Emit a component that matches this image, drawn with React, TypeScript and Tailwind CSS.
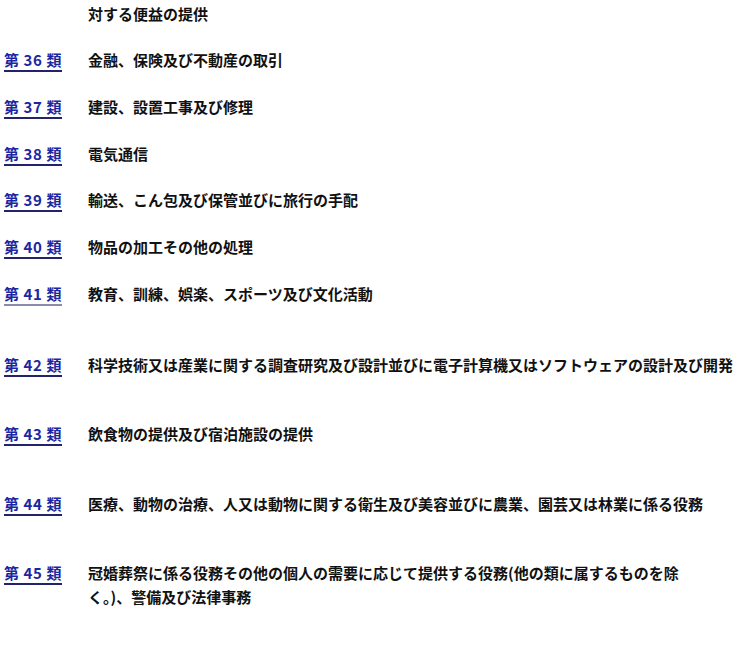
const ROWS = [
  { no: 36, text: "金融、保険及び不動産の取引", h: "h-[47px]" },
  { no: 37, text: "建設、設置工事及び修理", h: "h-[47px]" },
  { no: 38, text: "電気通信", h: "h-[46px]" },
  { no: 39, text: "輸送、こん包及び保管並びに旅行の手配", h: "h-[47px]" },
  { no: 40, text: "物品の加工その他の処理", h: "h-[47px]" },
  { no: 41, text: "教育、訓練、娯楽、スポーツ及び文化活動", h: "h-[71px]", faded: true },
  { no: 42, text: "科学技術又は産業に関する調査研究及び設計並びに電子計算機又はソフトウェアの設計及び開発", h: "h-[69px]" },
  { no: 43, text: "飲食物の提供及び宿泊施設の提供", h: "h-[70px]" },
  { no: 44, text: "医療、動物の治療、人又は動物に関する衛生及び美容並びに農業、園芸又は林業に係る役務", h: "h-[69px]" },
];

function ClassLink({ no, faded }: { no: number; faded?: boolean }) {
  return (
    <div className="w-[88px] shrink-0 pl-[4px]">
      <a
        href="#"
        className={`mt-[1px] inline-block leading-[20px] tracking-[0.6px] no-underline text-[#1b27a0] border-b-2 ${
          faded ? "border-[#8a8ab0]" : "border-[#22226e]"
        }`}
      >
        第 {no} 類
      </a>
    </div>
  );
}

export default function App() {
  return (
    <div
      className="w-[743px] h-[661px] overflow-hidden bg-white pt-[2px] text-[15px] font-bold leading-[24px] text-[#111]"
      style={{ fontFamily: '"Noto Sans CJK JP", "Noto Sans", sans-serif' }}
    >
      {/* continuation of the previous class */}
      <div className="h-[46px] pl-[88px] whitespace-nowrap">対する便益の提供</div>

      {ROWS.map((r) => (
        <div key={r.no} className={`flex ${r.h}`}>
          <ClassLink no={r.no} faded={r.faded} />
          <div className="whitespace-nowrap">{r.text}</div>
        </div>
      ))}

      <div className="flex">
        <ClassLink no={45} />
        <div>
          冠婚葬祭に係る役務その他の個人の需要に応じて提供する役務(他の類に属するものを除
          <br />
          く。)、警備及び法律事務
        </div>
      </div>
    </div>
  );
}
